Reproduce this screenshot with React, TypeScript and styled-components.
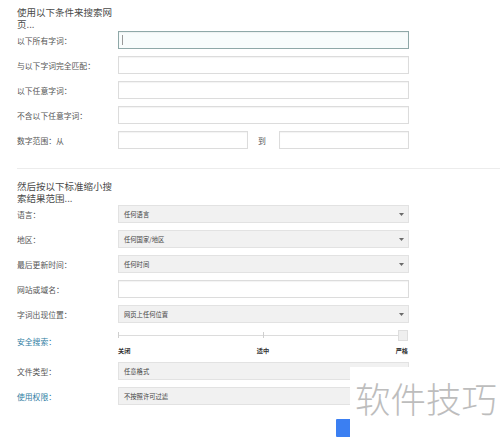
import React from "react";
import styled, { createGlobalStyle } from "styled-components";

const GlobalStyle = createGlobalStyle`
  html, body {
    margin: 0;
    padding: 0;
    background: #fff;
  }
  body {
    font-family: "Noto Sans CJK SC", "Noto Sans", sans-serif;
  }
`;

const Page = styled.div`
  position: relative;
  width: 500px;
  height: 442px;
  overflow: hidden;
  padding: 6px 0 0 17px;
  box-sizing: border-box;
`;

const Heading = styled.h2<{ $top?: number }>`
  width: 100px;
  margin: ${(p) => p.$top ?? 0}px 0 1px 0;
  font-size: 9.5px;
  line-height: 12px;
  font-weight: 400;
  color: #4a4a4a;
`;

const Form = styled.div`
  display: grid;
  grid-template-columns: 101px 291px;
  row-gap: 7px;
`;

const Label = styled.label<{ $accent?: boolean; $top?: boolean }>`
  display: flex;
  align-items: ${(p) => (p.$top ? "flex-start" : "center")};
  padding-top: ${(p) => (p.$top ? "6px" : "0")};
  font-size: 7.8px;
  color: ${(p) => (p.$accent ? "#2f7ea3" : "#555")};
  white-space: nowrap;
`;

const TextInput = styled.input<{ $focused?: boolean }>`
  display: block;
  box-sizing: border-box;
  width: 100%;
  height: 18px;
  margin: 0;
  padding: 0 4px;
  border: 1px solid ${(p) => (p.$focused ? "#8fa8a8" : "#dcdcdc")};
  background: ${(p) => (p.$focused ? "#f8fcfc" : "#fff")};
  box-shadow: inset 0 1px 1px rgba(0, 0, 0, 0.05);
  outline: none;
  font-size: 7px;
`;

const InputWrap = styled.div`
  position: relative;
`;

const Caret = styled.span`
  position: absolute;
  left: 4px;
  top: 4px;
  width: 1px;
  height: 10px;
  background: #999;
`;

const RangeRow = styled.div`
  display: grid;
  grid-template-columns: 130px 31px 130px;
  align-items: center;
`;

const RangeTo = styled.span`
  font-size: 7.8px;
  color: #555;
  padding-left: 10px;
`;

const Separator = styled.hr`
  height: 1px;
  border: none;
  background: #ececec;
  margin: 19px 0 0 0;
`;

const Dropdown = styled.div`
  box-sizing: border-box;
  height: 18px;
  display: flex;
  align-items: center;
  justify-content: space-between;
  padding: 0 4px 0 5px;
  border: 1px solid #e2e2e2;
  background: #f1f1f1;
  font-size: 6.3px;
  color: #444;
`;

const Slider = styled.div`
  display: flex;
  flex-direction: column;
  height: 25px;
`;

const Track = styled.div`
  position: relative;
  height: 12px;
`;

const TrackLine = styled.div`
  position: absolute;
  left: 0;
  right: 8px;
  top: 5px;
  height: 1px;
  background: #dcdcdc;
`;

const Tick = styled.div<{ $left: string }>`
  position: absolute;
  left: ${(p) => p.$left};
  top: 2px;
  width: 1px;
  height: 6px;
  background: #cfcfcf;
`;

const Handle = styled.div`
  position: absolute;
  right: 1px;
  top: 0;
  width: 10px;
  height: 11px;
  box-sizing: border-box;
  border: 1px solid #dedede;
  background: #efefef;
`;

const SliderLabels = styled.div`
  display: flex;
  justify-content: space-between;
  margin-top: 6px;
  padding-right: 1px;
  font-size: 6.2px;
  font-weight: 700;
  color: #333;
`;

const Actions = styled.div`
  display: flex;
  justify-content: flex-start;
  padding: 14px 0 0 319px;
`;

const SubmitButton = styled.button`
  width: 73px;
  height: 18px;
  border: none;
  border-radius: 1px;
  background: #3b7ff2;
  color: #fff;
  font-family: inherit;
  font-size: 7px;
`;

const Watermark = styled.div`
  position: absolute;
  left: 350px;
  top: 367px;
  right: 0;
  bottom: 0;
  background: #fff;
  padding: 13px 0 0 5px;
  font-size: 35.5px;
  font-weight: 300;
  line-height: 1;
  color: #bdbdbd;
`;

const Arrow = () => (
  <svg width="5" height="3" viewBox="0 0 5 3">
    <path d="M0 0 L5 0 L2.5 3 Z" fill="#6a6a6a" />
  </svg>
);

const Select = ({ value }: { value: string }) => (
  <Dropdown>
    <span>{value}</span>
    <Arrow />
  </Dropdown>
);

export default function App() {
  return (
    <>
      <GlobalStyle />
      <Page>
        <Heading>使用以下条件来搜索网页...</Heading>
        <Form>
          <Label>以下所有字词：</Label>
          <InputWrap>
            <TextInput $focused />
            <Caret />
          </InputWrap>
          <Label>与以下字词完全匹配：</Label>
          <TextInput />
          <Label>以下任意字词：</Label>
          <TextInput />
          <Label>不含以下任意字词：</Label>
          <TextInput />
          <Label>数字范围：从</Label>
          <RangeRow>
            <TextInput />
            <RangeTo>到</RangeTo>
            <TextInput />
          </RangeRow>
        </Form>
        <Separator />
        <Heading $top={11}>然后按以下标准缩小搜索结果范围...</Heading>
        <Form>
          <Label>语言：</Label>
          <Select value="任何语言" />
          <Label>地区：</Label>
          <Select value="任何国家/地区" />
          <Label>最后更新时间：</Label>
          <Select value="任何时间" />
          <Label>网站或域名：</Label>
          <TextInput />
          <Label>字词出现位置：</Label>
          <Select value="网页上任何位置" />
          <Label $accent $top>
            安全搜索：
          </Label>
          <Slider>
            <Track>
              <TrackLine />
              <Tick $left="0px" />
              <Tick $left="145px" />
              <Handle />
            </Track>
            <SliderLabels>
              <span>关闭</span>
              <span>适中</span>
              <span>严格</span>
            </SliderLabels>
          </Slider>
          <Label>文件类型：</Label>
          <Select value="任意格式" />
          <Label $accent>使用权限：</Label>
          <Select value="不按照许可过滤" />
        </Form>
        <Actions>
          <SubmitButton>高级搜索</SubmitButton>
        </Actions>
        <Watermark>软件技巧</Watermark>
      </Page>
    </>
  );
}
